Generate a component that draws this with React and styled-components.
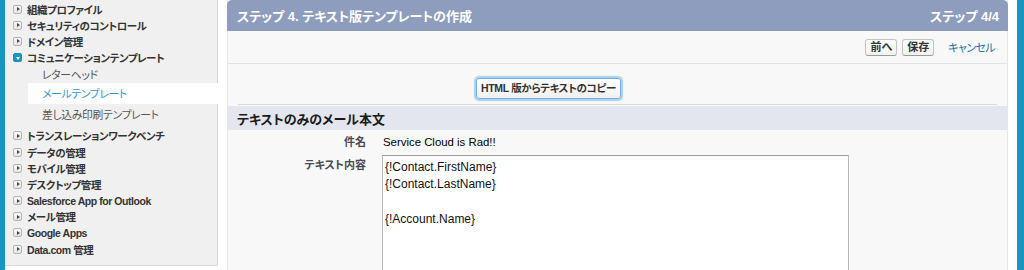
import React from "react";
import styled, { createGlobalStyle } from "styled-components";

const GlobalStyle = createGlobalStyle`
  html, body {
    margin: 0;
    padding: 0;
    background: #fff;
  }
  body {
    font-family: "Liberation Sans", "Noto Sans CJK JP", sans-serif;
    font-feature-settings: "palt";
    color: #222;
  }
`;

const Page = styled.div`
  display: flex;
  width: 1024px;
  height: 270px;
  overflow: hidden;
  background: #fff;
`;

const Strip = styled.div`
  flex: none;
  width: ${(p) => p.$w}px;
  margin-left: ${(p) => p.$ml || 0}px;
  background: #1996c0;
`;

const SideBar = styled.aside`
  flex: none;
  box-sizing: border-box;
  width: 213px;
  height: 266px;
  padding-top: 1px;
  display: flex;
  flex-direction: column;
  background: #f0f0f0;
  border-right: 1px solid #d4d4d4;
  border-bottom: 1px solid #d8d8d8;
`;

const NavItem = styled.div`
  display: flex;
  align-items: center;
  gap: 5px;
  height: 16.2px;
  margin-top: ${(p) => p.$mt || 0}px;
  padding-left: 8px;
  font-size: 10.5px;
  letter-spacing: -0.45px;
  font-weight: bold;
  color: #333;
  white-space: nowrap;
`;

const Toggle = styled.span`
  position: relative;
  flex: none;
  box-sizing: border-box;
  width: 9px;
  height: 9px;
  border-radius: 2px;
  border: 1px solid ${(p) => (p.$open ? "#1a8fbf" : "#b3b3b3")};
  background: ${(p) => (p.$open ? "#1996c9" : "linear-gradient(#fafafa, #e4e4e4)")};
  &::after {
    content: "";
    position: absolute;
    ${(p) =>
      p.$open
        ? `left: 1.5px; top: 2.5px;
           border-left: 2.5px solid transparent;
           border-right: 2.5px solid transparent;
           border-top: 3px solid #fff;`
        : `left: 2.5px; top: 1.5px;
           border-top: 2.5px solid transparent;
           border-bottom: 2.5px solid transparent;
           border-left: 3px solid #444;`}
  }
`;

const SubItem = styled.div`
  display: flex;
  align-items: center;
  height: ${(p) => p.$h}px;
  margin-top: ${(p) => p.$mt || 0}px;
  margin-left: 23px;
  margin-right: ${(p) => (p.$active ? -1 : 0)}px;
  padding-left: 14px;
  font-size: 10.8px;
  letter-spacing: -0.3px;
  color: ${(p) => (p.$active ? "#2a9ad3" : "#555")};
  background: ${(p) => (p.$active ? "#fff" : "transparent")};
  white-space: nowrap;
`;

const Main = styled.main`
  flex: none;
  box-sizing: border-box;
  width: 781px;
  height: 270px;
  margin-left: 9px;
  background: #f8f8f8;
  border-left: 1px solid #e6e6e6;
  border-right: 1px solid #e6e6e6;
`;

const Header = styled.header`
  display: flex;
  align-items: center;
  justify-content: space-between;
  height: 31px;
  margin: 0 -1px;
  padding: 0 9px 0 10px;
  border-radius: 5px 5px 0 0;
  background: #8e9dbe;
  color: #fff;
  font-size: 13px;
  font-weight: bold;
`;

const ButtonBar = styled.div`
  display: flex;
  align-items: center;
  justify-content: flex-end;
  gap: 5px;
  height: 32px;
  padding-right: 12px;
  border-bottom: 1px solid #e2e2e2;
`;

const Btn = styled.button`
  box-sizing: border-box;
  height: ${(p) => (p.$big ? 21 : 17)}px;
  padding: 0 4px;
  font-family: inherit;
  font-feature-settings: "palt";
  font-size: ${(p) => (p.$big ? 10.5 : 11)}px;
  letter-spacing: ${(p) => (p.$big ? -0.35 : 0)}px;
  font-weight: bold;
  color: #333;
  background: linear-gradient(#ffffff, #f1f1f1);
  border: 1px solid ${(p) => (p.$focus ? "#76aee6" : "#c2c2c2")};
  border-bottom-color: ${(p) => (p.$focus ? "#76aee6" : "#9a9a9a")};
  border-radius: 3px;
  box-shadow: ${(p) => (p.$focus ? "0 0 1px 2px #a9cff3" : "none")};
  line-height: 1;
`;

const CancelLink = styled.a`
  margin-left: 9px;
  font-size: 11px;
  letter-spacing: -0.6px;
  color: #1d6fb5;
  text-decoration: none;
`;

const CopyArea = styled.div`
  box-sizing: border-box;
  height: 40px;
  padding: 14px 0 0 248px;
`;

const Divider = styled.div`
  height: 1px;
  margin: 0 10px 1px;
  background: #dcdcdc;
`;

const SectionHead = styled.h3`
  display: flex;
  align-items: center;
  height: 24px;
  margin: 0 -1px;
  padding-left: 10px;
  background: #e3e6ef;
  font-size: 13px;
  font-weight: bold;
  color: #1a1a1a;
`;

const FormRow = styled.div`
  display: grid;
  grid-template-columns: 138px 1fr;
  column-gap: 16px;
  align-items: start;
  padding-top: ${(p) => p.$pt}px;
  padding-bottom: ${(p) => p.$pb || 0}px;
`;

const Label = styled.div`
  padding-top: ${(p) => p.$pt || 0}px;
  text-align: right;
  font-size: 11px;
  line-height: 16px;
  font-weight: bold;
  color: #4a4a56;
`;

const Value = styled.div`
  padding-left: 1px;
  font-size: 11.4px;
  line-height: 16px;
  color: #000;
`;

const BodyText = styled.textarea`
  box-sizing: border-box;
  display: block;
  width: 467px;
  height: 130px;
  margin: 0;
  padding: 3px 2px 1px;
  border: 1px solid #b9b9b9;
  border-top-color: #9c9c9c;
  background: #fff;
  font-family: "Liberation Sans", sans-serif;
  font-size: 12px;
  line-height: 17.3px;
  color: #111;
  resize: none;
  outline: none;
`;

const topItems = ["組織プロファイル", "セキュリティのコントロール", "ドメイン管理"];
const bottomItems = [
  "トランスレーションワークベンチ",
  "データの管理",
  "モバイル管理",
  "デスクトップ管理",
  "Salesforce App for Outlook",
  "メール管理",
  "Google Apps",
  "Data.com 管理",
];

const bodyText = "{!Contact.FirstName}\n{!Contact.LastName}\n\n{!Account.Name}";

const App = () => {
  return (
    <Page>
      <GlobalStyle />
      <Strip $w={5} />
      <SideBar>
        {topItems.map((t) => (
          <NavItem key={t}>
            <Toggle />
            {t}
          </NavItem>
        ))}
        <NavItem>
          <Toggle $open />
          コミュニケーションテンプレート
        </NavItem>
        <SubItem $h={16}>レターヘッド</SubItem>
        <SubItem $h={21} $mt={1} $active>
          メールテンプレート
        </SubItem>
        <SubItem $h={21}>差し込み印刷テンプレート</SubItem>
        {bottomItems.map((t, i) => (
          <NavItem key={t} $mt={i === 0 ? 3 : 0}>
            <Toggle />
            {t}
          </NavItem>
        ))}
      </SideBar>
      <Main>
        <Header>
          <span>ステップ 4. テキスト版テンプレートの作成</span>
          <span>ステップ 4/4</span>
        </Header>
        <ButtonBar>
          <Btn>前へ</Btn>
          <Btn>保存</Btn>
          <CancelLink href="#">キャンセル</CancelLink>
        </ButtonBar>
        <CopyArea>
          <Btn $big $focus>HTML 版からテキストのコピー</Btn>
        </CopyArea>
        <Divider />
        <SectionHead>テキストのみのメール本文</SectionHead>
        <FormRow $pt={4} $pb={2}>
          <Label>件名</Label>
          <Value>Service Cloud is Rad!!</Value>
        </FormRow>
        <FormRow $pt={3}>
          <Label $pt={2}>テキスト内容</Label>
          <BodyText readOnly value={bodyText} />
        </FormRow>
      </Main>
      <Strip $w={7} $ml={9} />
    </Page>
  );
};

export default App;
